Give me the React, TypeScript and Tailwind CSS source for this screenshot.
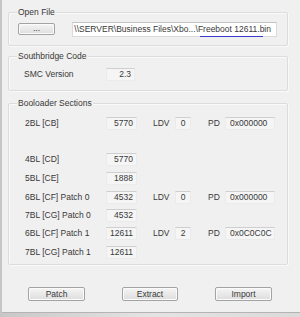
import React from 'react';

type Row = {
  label: string;
  value: string;
  ldv?: string;
  pd?: string;
  mt: string;
};

const rows: Row[] = [
  { label: '2BL [CB]', value: '5770', ldv: '0', pd: '0x000000', mt: 'mt-0' },
  { label: '4BL [CD]', value: '5770', mt: 'mt-[23px]' },
  { label: '5BL [CE]', value: '1888', mt: 'mt-[6px]' },
  { label: '6BL [CF] Patch 0', value: '4532', ldv: '0', pd: '0x000000', mt: 'mt-[6px]' },
  { label: '7BL [CG] Patch 0', value: '4532', mt: 'mt-[5px]' },
  { label: '6BL [CF] Patch 1', value: '12611', ldv: '2', pd: '0x0C0C0C', mt: 'mt-[5px]' },
  { label: '7BL [CG] Patch 1', value: '12611', mt: 'mt-[6px]' },
];

const groupCls =
  'relative w-[280px] border border-[#dcdcdc] rounded-[2px] shadow-[inset_1px_1px_0_#fafafa,1px_1px_0_#fafafa]';
const legendCls = 'absolute left-[8px] top-[-6px] px-[1px] bg-[#f0f0f0] leading-[11px]';
const fieldCls =
  'h-[13px] flex items-center border border-[#ebebeb] border-t-[#cfcfcf] bg-[#f5f5f5] leading-none';
const btnCls =
  'flex items-center justify-center border border-[#a3a3a3] rounded-[2px] bg-gradient-to-b from-[#f5f5f5] to-[#dddddd] shadow-[inset_0_0_0_1px_#fbfbfb] leading-none';

export default function App() {
  return (
    <div className="w-[300px] h-[317px] flex flex-col bg-[#f0f0f0] border-l-2 border-[#c6c6c6] text-[8.5px] text-[#383838] font-['Liberation_Sans',Arial,sans-serif]">
      <div className="flex-1 pl-[6px] pt-[12px]">
        {/* Open File */}
        <div className={`${groupCls} h-[34px]`}>
          <span className={legendCls}>Open File</span>
          <div className="flex items-start pl-[9px] pt-[9px]">
            <button type="button" className={`${btnCls} mt-[1px] w-[37px] h-[12px] pb-[2px]`}>
              ...
            </button>
            <div className="relative ml-[17px] w-[205px] h-[15px] flex items-center justify-end pr-[5px] bg-white border border-[#dadada] border-t-[#c4c4c4] leading-none whitespace-nowrap">
              \\SERVER\Business Files\Xbo...\Freeboot 12611.bin
              <span className="absolute left-[127px] bottom-[-1px] w-[63px] h-[1px] bg-[#3b3bd0]" />
            </div>
          </div>
        </div>

        {/* Southbridge Code */}
        <div className={`${groupCls} h-[35px] mt-[10px]`}>
          <span className={legendCls}>Southbridge Code</span>
          <div className="flex items-center pl-[15px] pt-[11px]">
            <span className="w-[82px]">SMC Version</span>
            <div className={`${fieldCls} w-[29px] justify-end pr-[3px]`}>2.3</div>
          </div>
        </div>

        {/* Booloader Sections */}
        <div className={`${groupCls} h-[162px] mt-[12px]`}>
          <span className={legendCls}>Booloader Sections</span>
          <div className="flex flex-col pl-[16px] pt-[13px]">
            {rows.map((r) => (
              <div key={r.label} className={`flex items-center h-[13px] ${r.mt}`}>
                <span className="w-[81px] whitespace-nowrap">{r.label}</span>
                <div className={`${fieldCls} w-[31px] justify-end pr-[3px]`}>{r.value}</div>
                {r.ldv !== undefined && (
                  <>
                    <span className="ml-[16px] w-[22px]">LDV</span>
                    <div className={`${fieldCls} w-[16px] justify-center`}>{r.ldv}</div>
                    <span className="ml-[17px] w-[17px]">PD</span>
                    <div className={`${fieldCls} w-[50px] pl-[4px] whitespace-nowrap`}>{r.pd}</div>
                  </>
                )}
              </div>
            ))}
          </div>
        </div>

        <div className="flex mt-[22px] pl-[20px]">
          <button type="button" className={`${btnCls} w-[57px] h-[14px]`}>
            Patch
          </button>
          <button type="button" className={`${btnCls} ml-[37px] w-[56px] h-[14px]`}>
            Extract
          </button>
          <button type="button" className={`${btnCls} ml-[37px] w-[57px] h-[14px]`}>
            Import
          </button>
        </div>
      </div>
      <div className="h-[5px] border-t border-[#b4b4b4] bg-gradient-to-r from-[#c8c8c8] via-[#e4e4e4] to-[#dadada]" />
    </div>
  );
}
